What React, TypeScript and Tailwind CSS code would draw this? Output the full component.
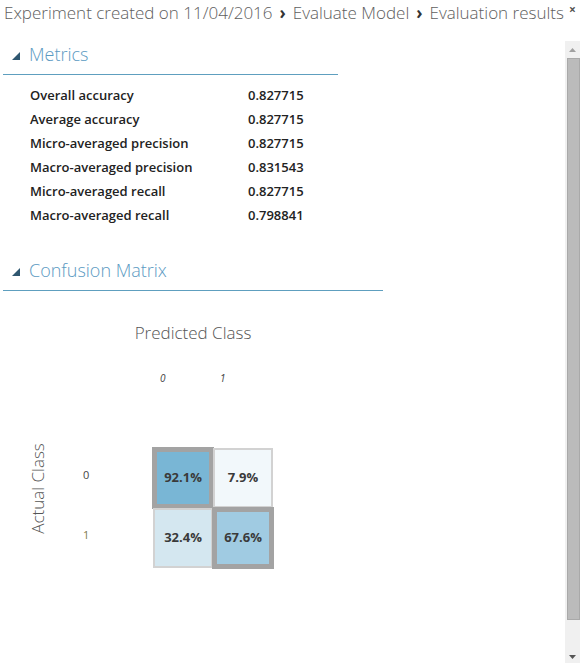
const metrics: [string, string][] = [
  ['Overall accuracy', '0.827715'],
  ['Average accuracy', '0.827715'],
  ['Micro-averaged precision', '0.827715'],
  ['Macro-averaged precision', '0.831543'],
  ['Micro-averaged recall', '0.827715'],
  ['Macro-averaged recall', '0.798841'],
]

function Caret() {
  return (
    <svg width="8" height="8" viewBox="0 0 8 8" className="mb-[7px] shrink-0">
      <path d="M8 0 L8 8 L0 8 Z" fill="#2f5770" />
    </svg>
  )
}

function SectionHeader({ title, width }: { title: string; width: string }) {
  return (
    <div className={`ml-[3px] flex h-[34px] items-end gap-[9px] border-b border-[#5e9fbf] pb-[7px] pl-[9px] ${width}`}>
      <Caret />
      <span className="text-[18px] leading-[25px] font-light text-[#5b9ac2]">{title}</span>
    </div>
  )
}

function Cell({ value, bg, strong }: { value: string; bg: string; strong?: boolean }) {
  return (
    <div
      className={`relative flex h-[60px] w-[60px] items-center justify-center border-2 border-[#d2d2d2] text-[13px] font-bold text-[#3a3a3a] ${bg}`}
    >
      {value}
      {strong && (
        <div className="pointer-events-none absolute inset-[-3px] border-[5px] border-[#a3a3a3]" />
      )}
    </div>
  )
}

function Scrollbar() {
  return (
    <div className="flex w-[15px] shrink-0 flex-col items-end bg-[#f0f0f0]">
      <div className="flex h-[17px] w-full items-center justify-center">
        <svg width="7" height="4" viewBox="0 0 7 4">
          <path d="M0 4 L3.5 0 L7 4 Z" fill="#a0a0a0" />
        </svg>
      </div>
      <div className="h-[562px] w-[13px] border border-[#a9a9a9] bg-[#bbbbbb]" />
      <div className="flex flex-1 w-full items-end justify-center pb-[4px]">
        <svg width="7" height="4" viewBox="0 0 7 4">
          <path d="M0 0 L7 0 L3.5 4 Z" fill="#555555" />
        </svg>
      </div>
    </div>
  )
}

export default function App() {
  return (
    <div className="flex h-[663px] w-[580px] flex-col overflow-hidden bg-white font-['Open_Sans',sans-serif]">
      <header className="flex h-[41px] shrink-0 items-start whitespace-nowrap pl-[4px] text-[17px] font-light text-[#606060]">
        <span>Experiment created on 11/04/2016</span>
        <span className="mx-[7px] font-bold text-[#333]">›</span>
        <span>Evaluate Model</span>
        <span className="mx-[7px] font-bold text-[#333]">›</span>
        <span>Evaluation results</span>
        <span className="ml-[5px] mt-[1px] text-[12px] font-bold text-[#555]">×</span>
      </header>

      <div className="flex min-h-0 flex-1">
        <main className="flex-1">
          <SectionHeader title="Metrics" width="w-[335px]" />

          <div className="mt-[9px] flex flex-col pl-[30px] text-[13px] font-semibold text-[#222]">
            {metrics.map(([label, value]) => (
              <div key={label} className="flex h-[24px] items-center">
                <span className="w-[218px]">{label}</span>
                <span>{value}</span>
              </div>
            ))}
          </div>

          <div className="mt-[29px]">
            <SectionHeader title="Confusion Matrix" width="w-[380px]" />
          </div>

          <div className="relative h-[300px]">
            <div className="absolute left-[123px] top-[30px] w-[140px] whitespace-nowrap text-center text-[17px] leading-[23px] font-light text-[#555]">
              Predicted Class
            </div>
            <div className="absolute left-[160px] top-[80px] text-[10px] italic text-[#444]">0</div>
            <div className="absolute left-[220px] top-[80px] text-[10px] italic text-[#444]">1</div>

            <div className="absolute left-[-13px] top-[186px] w-[100px] -rotate-90 whitespace-nowrap text-center text-[17px] leading-[23px] font-light text-[#555]">
              Actual Class
            </div>

            <div className="absolute left-[83px] top-[176px] text-[11px] text-[#444]">0</div>
            <div className="absolute left-[83px] top-[236px] text-[11px] text-[#7d7a4a]">1</div>

            <div className="absolute left-[153px] top-[157px] grid grid-cols-[60px_60px]">
              <Cell value="92.1%" bg="bg-[#79b6d5]" strong />
              <Cell value="7.9%" bg="bg-[#f2f8fb]" />
              <Cell value="32.4%" bg="bg-[#d4e7f0]" />
              <Cell value="67.6%" bg="bg-[#a0cbe2]" strong />
            </div>
          </div>
        </main>
        <Scrollbar />
      </div>
    </div>
  )
}
